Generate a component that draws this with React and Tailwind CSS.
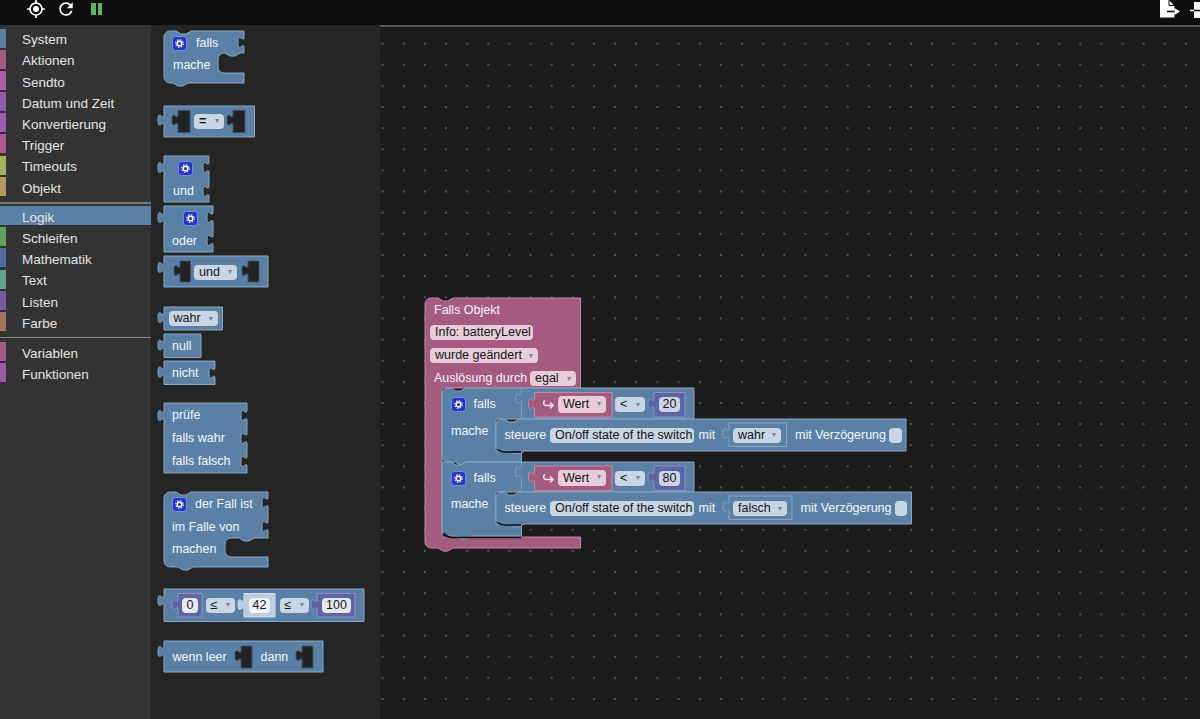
import React from 'react';

const FONT = '"Liberation Sans", Arial, sans-serif';

// Blockly-style connector pieces
const T = 'c0,7 -6,-6 -6,5.5 s6,-2 6,5.5';
const O = 'c0,-7 -6,6 -6,-5.5 s6,2 6,-5.5';
const N = 'l5,3 5,0 5,-3';
const B = 'l-5,3 -5,0 -5,-3';
const hole = (x, y, w, h) => `M${x},${y} h${w} v${h} h${-w} V${y + 15} ${O} V${y} z`;

const BLUE = { fill: '#5b80a5', stroke: '#8ca6c0' };
const PINK = { fill: '#a55b80', stroke: '#c08ca6' };
const MATH = { fill: '#5b67a5', stroke: '#8c95c0' };
const PALE = { fill: '#bccde0', stroke: '#d5e0eb' };

const toolboxTop = [
  ['System', '#5b80a5'],
  ['Aktionen', '#a55b80'],
  ['Sendto', '#b35aa6'],
  ['Datum und Zeit', '#8f5bb0'],
  ['Konvertierung', '#a05bb3'],
  ['Trigger', '#b0588c'],
  ['Timeouts', '#a5b05b'],
  ['Objekt', '#b59a5b'],
];
const toolboxMid = [
  ['Logik', '#5b80a5', true],
  ['Schleifen', '#5ba55b'],
  ['Mathematik', '#5b67a5'],
  ['Text', '#5ba58c'],
  ['Listen', '#745ba5'],
  ['Farbe', '#a5745b'],
];
const toolboxEnd = [
  ['Variablen', '#a55b80'],
  ['Funktionen', '#995ba5'],
];

const valueRow = (dy) => [
  [PINK, `M534.5,${417 + dy} V${409 + dy} ${O} V${392.5 + dy} H612 V${417 + dy} z`],
  [MATH, `M654,${417 + dy} V${409 + dy} ${O} V${392.5 + dy} H685 V${417 + dy} z`],
];

const workspaceShapes = [
  [PINK, `M425,304 a6,6 0 0 1 6,-6 h7 ${N} H580.5 V388 H442 V537 H580.5 V548 H453 ${B} H431 a6,6 0 0 1 -6,-6 z`],
  [BLUE, `M442,394 a6,6 0 0 1 6,-6 h3 ${N} H694 V419 H496 V451 H521.5 V462 H470 ${B} H448 a6,6 0 0 1 -6,-6 z`],
  [BLUE, `M442,462 H451 ${N} H694 V492 H496 V524 H521.5 V536 H471 ${B} H448 a6,6 0 0 1 -6,-6 z`],
  [BLUE, `M496,425 a6,6 0 0 1 6,-6 h2 ${N} H906 V451 H524 ${B} H502 a6,6 0 0 1 -6,-6 z`],
  [BLUE, `M496,498 a6,6 0 0 1 6,-6 h2 ${N} H911.5 V524 H524 ${B} H502 a6,6 0 0 1 -6,-6 z`],
  ...valueRow(0),
  ...valueRow(73.5),
  [BLUE, `M729,446.5 V439 ${O} V423 H786.5 V446.5 z`],
  [BLUE, `M729,519.5 V512 ${O} V496 H792 V519.5 z`],
];

const Shape = ({ color, d }) => (
  <path d={d} fill={color.fill} stroke={color.stroke} strokeWidth="1" strokeLinejoin="round" />
);

const Label = ({ className = '', children }) => (
  <span className={`whitespace-nowrap text-[12.5px] leading-none text-[#f4f7fa] ${className}`}>{children}</span>
);

// rounded editable / dropdown field on a block
const Pill = ({ w, bg = 'bg-[#c9d6e4]', arrow, center, tall, className = '', children }) => (
  <span
    className={`relative flex shrink-0 items-center rounded-[4px] text-[12.5px] leading-none text-[#151515] whitespace-nowrap ${tall ? 'h-[16.5px]' : 'h-[15px]'} ${bg} ${center ? 'justify-center' : 'pl-[5px]'} ${className}`}
    style={{ width: w }}
  >
    {children}
    {arrow && <span className="absolute right-[5px] top-[3.5px] text-[8px] leading-[8px] text-[#71879c]">▾</span>}
  </span>
);

const Gear = ({ className = '' }) => (
  <svg className={`shrink-0 ${className}`} width="15" height="15" viewBox="0 0 15 15">
    <rect x="0.5" y="0.5" width="14" height="14" rx="3" fill="#2536c4" stroke="#7d8ce8" />
    <circle cx="7.5" cy="7.5" r="2.3" fill="none" stroke="#fff" strokeWidth="1.4" />
    <circle cx="7.5" cy="7.5" r="3.7" fill="none" stroke="#fff" strokeWidth="1.2" strokeDasharray="1.5 1.4" />
  </svg>
);

const HookArrow = ({ className = '' }) => (
  <svg className={`shrink-0 ${className}`} width="13" height="13" viewBox="0 0 13 13" fill="none" stroke="#f5e4ec" strokeWidth="1.5">
    <path d="M3,2.5 C0.8,3.5 1,7.5 4.5,7.5 H11" />
    <path d="M8,4.5 L11.2,7.5 L8,10.5" />
  </svg>
);

// one block of the flyout: its outline is drawn in picture coordinates, its fields flow on top
const Block = ({ x, y, w, h, shapes, holes = [], className = '', children }) => (
  <div className={`relative shrink-0 ${className}`} style={{ width: w, height: h }}>
    <svg className="absolute left-0 top-0 overflow-visible" width={w} height={h} viewBox={`${x} ${y} ${w} ${h}`}>
      {shapes.map(([c, d], i) => <Shape key={i} color={c} d={d} />)}
      {holes.map((d, i) => <path key={i} d={d} fill="#222222" stroke="#3f5266" />)}
    </svg>
    <div className="relative flex h-full flex-col">{children}</div>
  </div>
);

const Row = ({ item }) => {
  const [name, color, active] = item;
  return (
    <div className="h-[21.2px]">
      <div className={`flex h-[19px] ${active ? 'bg-[#5b80a5]' : ''}`}>
        <div className="h-full w-[6px]" style={{ backgroundColor: color }} />
        <div className="flex items-center pl-[16px] pt-[4px] text-[13.5px] leading-none text-[#e4e4e4]">{name}</div>
      </div>
    </div>
  );
};

const Toolbox = () => (
  <div className="h-full w-[151px] shrink-0 bg-[#333333] pt-[3.5px]">
    {toolboxTop.map((t) => <Row key={t[0]} item={t} />)}
    <div className="mb-[2.6px] mt-[3.5px] h-[2px] bg-[#777777]" />
    {toolboxMid.map((t) => <Row key={t[0]} item={t} />)}
    <div className="mb-[4px] mt-[3.6px] h-px bg-[#8a8a8a]" />
    {toolboxEnd.map((t) => <Row key={t[0]} item={t} />)}
  </div>
);

const Flyout = () => (
  <div className="flex h-full w-[229px] shrink-0 flex-col items-start overflow-hidden bg-[#252525] pl-[13px] pt-[6px]">
    <Block x={164} y={31} w={80} h={52} shapes={[[BLUE, `M164,37 a6,6 0 0 1 6,-6 h6 ${N} H244 V37 ${T} V53 H240 ${B} H224 a6,6 0 0 0 -6,6 v8 a6,6 0 0 0 6,6 H244 V83 H188 ${B} H170 a6,6 0 0 1 -6,-6 z`]]}>
      <div className="flex h-[23px] items-center gap-[9px] pl-[8px] pt-[1px]"><Gear /><Label>falls</Label></div>
      <div className="flex h-[22px] items-center pl-[9px] pt-[1px]"><Label>mache</Label></div>
    </Block>

    <Block
      x={164} y={105.5} w={90.5} h={31} className="mt-[22.5px]"
      shapes={[[BLUE, `M164,136.5 V125 ${O} V105.5 H254.5 V136.5 z`]]}
      holes={[hole(178, 110, 12, 22), hole(233, 110, 12, 22)]}
    >
      <div className="flex h-full items-center pl-[30px]"><Pill w={30} arrow><span className="font-bold">=</span></Pill></div>
    </Block>

    <Block x={164} y={156} w={45} h={46} className="mt-[19.5px]" shapes={[[BLUE, `M164,202 V173 ${O} V156 H209 V162 ${T} V186 ${T} V202 z`]]}>
      <div className="flex h-[25px] items-center pl-[14px]"><Gear /></div>
      <div className="flex h-[20px] items-center pl-[9px]"><Label>und</Label></div>
    </Block>

    <Block x={164} y={206} w={49} h={46} className="mt-[4px]" shapes={[[BLUE, `M164,252 V223 ${O} V206 H213 V212 ${T} V235 ${T} V252 z`]]}>
      <div className="flex h-[25px] items-center pl-[19px]"><Gear /></div>
      <div className="flex h-[20px] items-center pl-[8px]"><Label>oder</Label></div>
    </Block>

    <Block
      x={164} y={256} w={104} h={31} className="mt-[4px]"
      shapes={[[BLUE, `M164,287 V273 ${O} V256 H268 V287 z`]]}
      holes={[hole(180, 261, 10.5, 21), hole(248, 261, 11, 21)]}
    >
      <div className="flex h-full items-center pl-[30px] pt-[1px]"><Pill w={43} arrow>und</Pill></div>
    </Block>

    <Block x={164} y={307} w={58.5} h={23} className="mt-[20px]" shapes={[[BLUE, `M164,330 V323 ${O} V307 H222.5 V330 z`]]}>
      <div className="flex h-full items-center pl-[4.5px]"><Pill w={49.5} arrow>wahr</Pill></div>
    </Block>

    <Block x={164} y={333.5} w={37} h={23.5} className="mt-[3.5px]" shapes={[[BLUE, `M164,357 V350 ${O} V333.5 H201 V357 z`]]}>
      <div className="flex h-full items-center pl-[8px] pt-[1px]"><Label>null</Label></div>
    </Block>

    <Block x={164} y={360.5} w={51} h={23.5} className="mt-[3.5px]" shapes={[[BLUE, `M164,384 V377 ${O} V360.5 H215 V367 ${T} V384 z`]]}>
      <div className="flex h-full items-center pl-[8px] pt-[1px]"><Label>nicht</Label></div>
    </Block>

    <Block x={164} y={403} w={83} h={70} className="mt-[19px]" shapes={[[BLUE, `M164,473 V421 ${O} V403 H247 V410 ${T} V433 ${T} V456 ${T} V473 z`]]}>
      <div className="flex flex-col pl-[8px] pt-[0.5px]">
        <div className="flex h-[23px] items-center"><Label>prüfe</Label></div>
        <div className="flex h-[23px] items-center"><Label>falls wahr</Label></div>
        <div className="flex h-[23px] items-center"><Label>falls falsch</Label></div>
      </div>
    </Block>

    <Block x={164} y={492} w={104} h={75} className="mt-[19px]" shapes={[[BLUE, `M164,498 a6,6 0 0 1 6,-6 h6 ${N} H268 V497 ${T} V521 ${T} V538 H254 ${B} H231 a6,6 0 0 0 -6,6 v7 a6,6 0 0 0 6,6 H268 V567 H193 ${B} H170 a6,6 0 0 1 -6,-6 z`]]}>
      <div className="flex flex-col pl-[8px] pt-[1px]">
        <div className="flex h-[22.5px] items-center gap-[8px]"><Gear /><Label>der Fall ist</Label></div>
        <div className="flex h-[22.5px] items-center"><Label>im Falle von</Label></div>
        <div className="flex h-[22.5px] items-center"><Label>machen</Label></div>
      </div>
    </Block>

    <Block
      x={164} y={589} w={200} h={32.5} className="mt-[22px]"
      shapes={[
        [BLUE, `M164,621.5 V606 ${O} V589 H364 V621.5 z`],
        [MATH, `M178,617 V610 ${O} V593.5 H202 V617 z`],
        [PALE, `M244,617 V610 ${O} V593.5 H275 V617 z`],
        [MATH, `M317,617 V610 ${O} V593.5 H355 V617 z`],
      ]}
    >
      <div className="flex h-full items-center pl-[18px]">
        <Pill w={16} bg="bg-[#e6e9f3]" center>0</Pill>
        <Pill w={29.5} arrow className="ml-[7.5px]">≤</Pill>
        <Pill w={21} bg="bg-[#f1f4f8]" center className="ml-[14px]">42</Pill>
        <Pill w={29} arrow className="ml-[9.5px]">≤</Pill>
        <Pill w={29} bg="bg-[#e6e9f3]" center className="ml-[13.5px]">100</Pill>
      </div>
    </Block>

    <Block
      x={164} y={641} w={159} h={31} className="mt-[19.5px]"
      shapes={[[BLUE, `M164,672 V657 ${O} V641 H323 V672 z`]]}
      holes={[hole(241, 646, 11, 22), hole(302, 646, 11, 22)]}
    >
      <div className="flex h-full items-center pl-[8.5px] pt-[1px]">
        <Label className="w-[88px]">wenn leer</Label>
        <Label>dann</Label>
      </div>
    </Block>
  </div>
);

const IfBlock = ({ num, target, targetW, labelW, tailH }) => (
  <div className="flex flex-col">
    <div className="flex h-[31px] items-center pt-[2px]">
      <div className="flex w-[79.5px] items-center gap-[8px] pl-[8.5px]"><Gear /><Label>falls</Label></div>
      <HookArrow className="ml-[20px]" />
      <Pill w={48} tall bg="bg-[#e6cdd9]" arrow className="ml-[3.5px]">Wert</Pill>
      <Pill w={30} arrow className="ml-[9px]">&lt;</Pill>
      <Pill w={21} bg="bg-[#ccd1e6]" center className="ml-[14px]">{num}</Pill>
    </div>
    <div className="flex h-[32px]">
      <div className="flex w-[54px] items-center pb-[8px] pl-[9px]"><Label>mache</Label></div>
      <div className="flex items-center pl-[8.5px]">
        <Label className="w-[45.5px]">steuere</Label>
        <Pill w={144}>On/off state of the switch</Pill>
        <Label className="ml-[4.5px] w-[34.5px]">mit</Label>
        <Pill w={targetW} arrow>{target}</Pill>
        <Label className={labelW}>mit Verzögerung</Label>
        <span className="h-[15px] w-[12.5px] rounded-[4px] bg-[#c9d6e4]" />
      </div>
    </div>
    <div style={{ height: tailH }} />
  </div>
);

const Workspace = () => (
  <div className="relative h-full min-w-0 flex-1 overflow-hidden border-t-2 border-[#555555] bg-[#1c1c1c] bg-[radial-gradient(circle,#565656_1px,transparent_1.2px)] bg-[size:21.15px_21.15px] bg-[position:-8px_6px]">
    {/* the block stack sits freely on the canvas */}
    <div className="absolute left-[45px] top-[271px] h-[252px] w-[490px]">
      <svg className="absolute left-0 top-0 overflow-visible" width="490" height="252" viewBox="425 298 490 252">
        {workspaceShapes.map(([c, d], i) => <Shape key={i} color={c} d={d} />)}
        <g fill="none" stroke="#8ca6c0" strokeWidth="0.8">
          <path d={`M521.5,388 V393 ${T} V419`} />
          <path d={`M521.5,462 V466.5 ${T} V492`} />
        </g>
        <g fill="none" stroke="#0d0d0d" strokeWidth="1.6">
          <path d="M498,449.5 C500,451.5 503,452 506,452 H521" />
          <path d="M498,522.5 C500,524.5 503,525 506,525 H521" />
          <path d="M444,533 C446,536.5 449,537.5 452,537.5 H521" />
        </g>
      </svg>

      <div className="relative flex flex-col">
        <div className="flex h-[23px] items-center pl-[9px] pt-[2px]"><Label>Falls Objekt</Label></div>
        <div className="flex h-[23px] items-center pl-[5px]"><Pill w={103} bg="bg-[#e6cdd9]">Info: batteryLevel</Pill></div>
        <div className="flex h-[23px] items-center pl-[5px]"><Pill w={108} bg="bg-[#e6cdd9]" arrow>wurde geändert</Pill></div>
        <div className="flex h-[21px] items-center pl-[9px] pt-[2px]">
          <Label className="w-[96px]">Auslösung durch</Label>
          <Pill w={46} bg="bg-[#e6cdd9]" arrow>egal</Pill>
        </div>
        <div className="flex flex-col pl-[17px]">
          <IfBlock num="20" target="wahr" targetW={48} labelW="ml-[14px] w-[94px]" tailH={10.5} />
          <IfBlock num="80" target="falsch" targetW={54} labelW="ml-[13.5px] w-[94px]" tailH={11.5} />
        </div>
      </div>
    </div>
  </div>
);

const TopBar = () => (
  <div className="flex h-[25px] shrink-0 items-start bg-[#0e0e0e] pl-[27px]">
    <svg width="18" height="18" viewBox="0 0 18 18" fill="none" stroke="#fff">
      <circle cx="9" cy="9" r="6" strokeWidth="1.7" />
      <circle cx="9" cy="9" r="3" fill="#fff" stroke="none" />
      <path d="M9,0 V3 M9,15 V18 M0,9 H3 M15,9 H18" strokeWidth="1.7" />
    </svg>
    <svg className="ml-[13px] mt-[1px]" width="16" height="16" viewBox="2.5 2.5 19 19" fill="#fff">
      <path d="M17.65 6.35C16.2 4.9 14.21 4 12 4c-4.42 0-7.99 3.58-7.99 8s3.57 8 7.99 8c3.73 0 6.84-2.55 7.73-6h-2.08c-.82 2.33-3.04 4-5.65 4-3.31 0-6-2.69-6-6s2.69-6 6-6c1.66 0 3.14.69 4.22 1.78L13 11h7V4l-2.35 2.35z" />
    </svg>
    <div className="ml-[17px] mt-[3px] flex gap-[2px]">
      <div className="h-[12px] w-[4.5px] bg-[#5cb860]" />
      <div className="h-[12px] w-[4.5px] bg-[#5cb860]" />
    </div>
    <svg className="ml-auto" width="40" height="20" viewBox="0 0 40 20">
      <path d="M0,0 H9 L14.5,6 V17.5 H0 z" fill="#fff" />
      <path d="M9,0 V5.5 H14.5" fill="none" stroke="#0e0e0e" strokeWidth="1" />
      <path d="M7,11.5 H16" stroke="#0e0e0e" strokeWidth="1.6" />
      <path d="M14.5,8 L20,11.5 L14.5,15 z" fill="#fff" />
      <path d="M34,2 H40 V18 H34 z" fill="#fff" />
      <path d="M30,10.5 H34" stroke="#fff" strokeWidth="1.6" />
      <path d="M34,10.5 H40" stroke="#0e0e0e" strokeWidth="1.6" />
    </svg>
  </div>
);

export default function App() {
  return (
    <div className="flex h-[719px] w-[1200px] flex-col overflow-hidden bg-[#1c1c1c]" style={{ fontFamily: FONT }}>
      <TopBar />
      <div className="flex min-h-0 flex-1">
        <Toolbox />
        <Flyout />
        <Workspace />
      </div>
    </div>
  );
}
